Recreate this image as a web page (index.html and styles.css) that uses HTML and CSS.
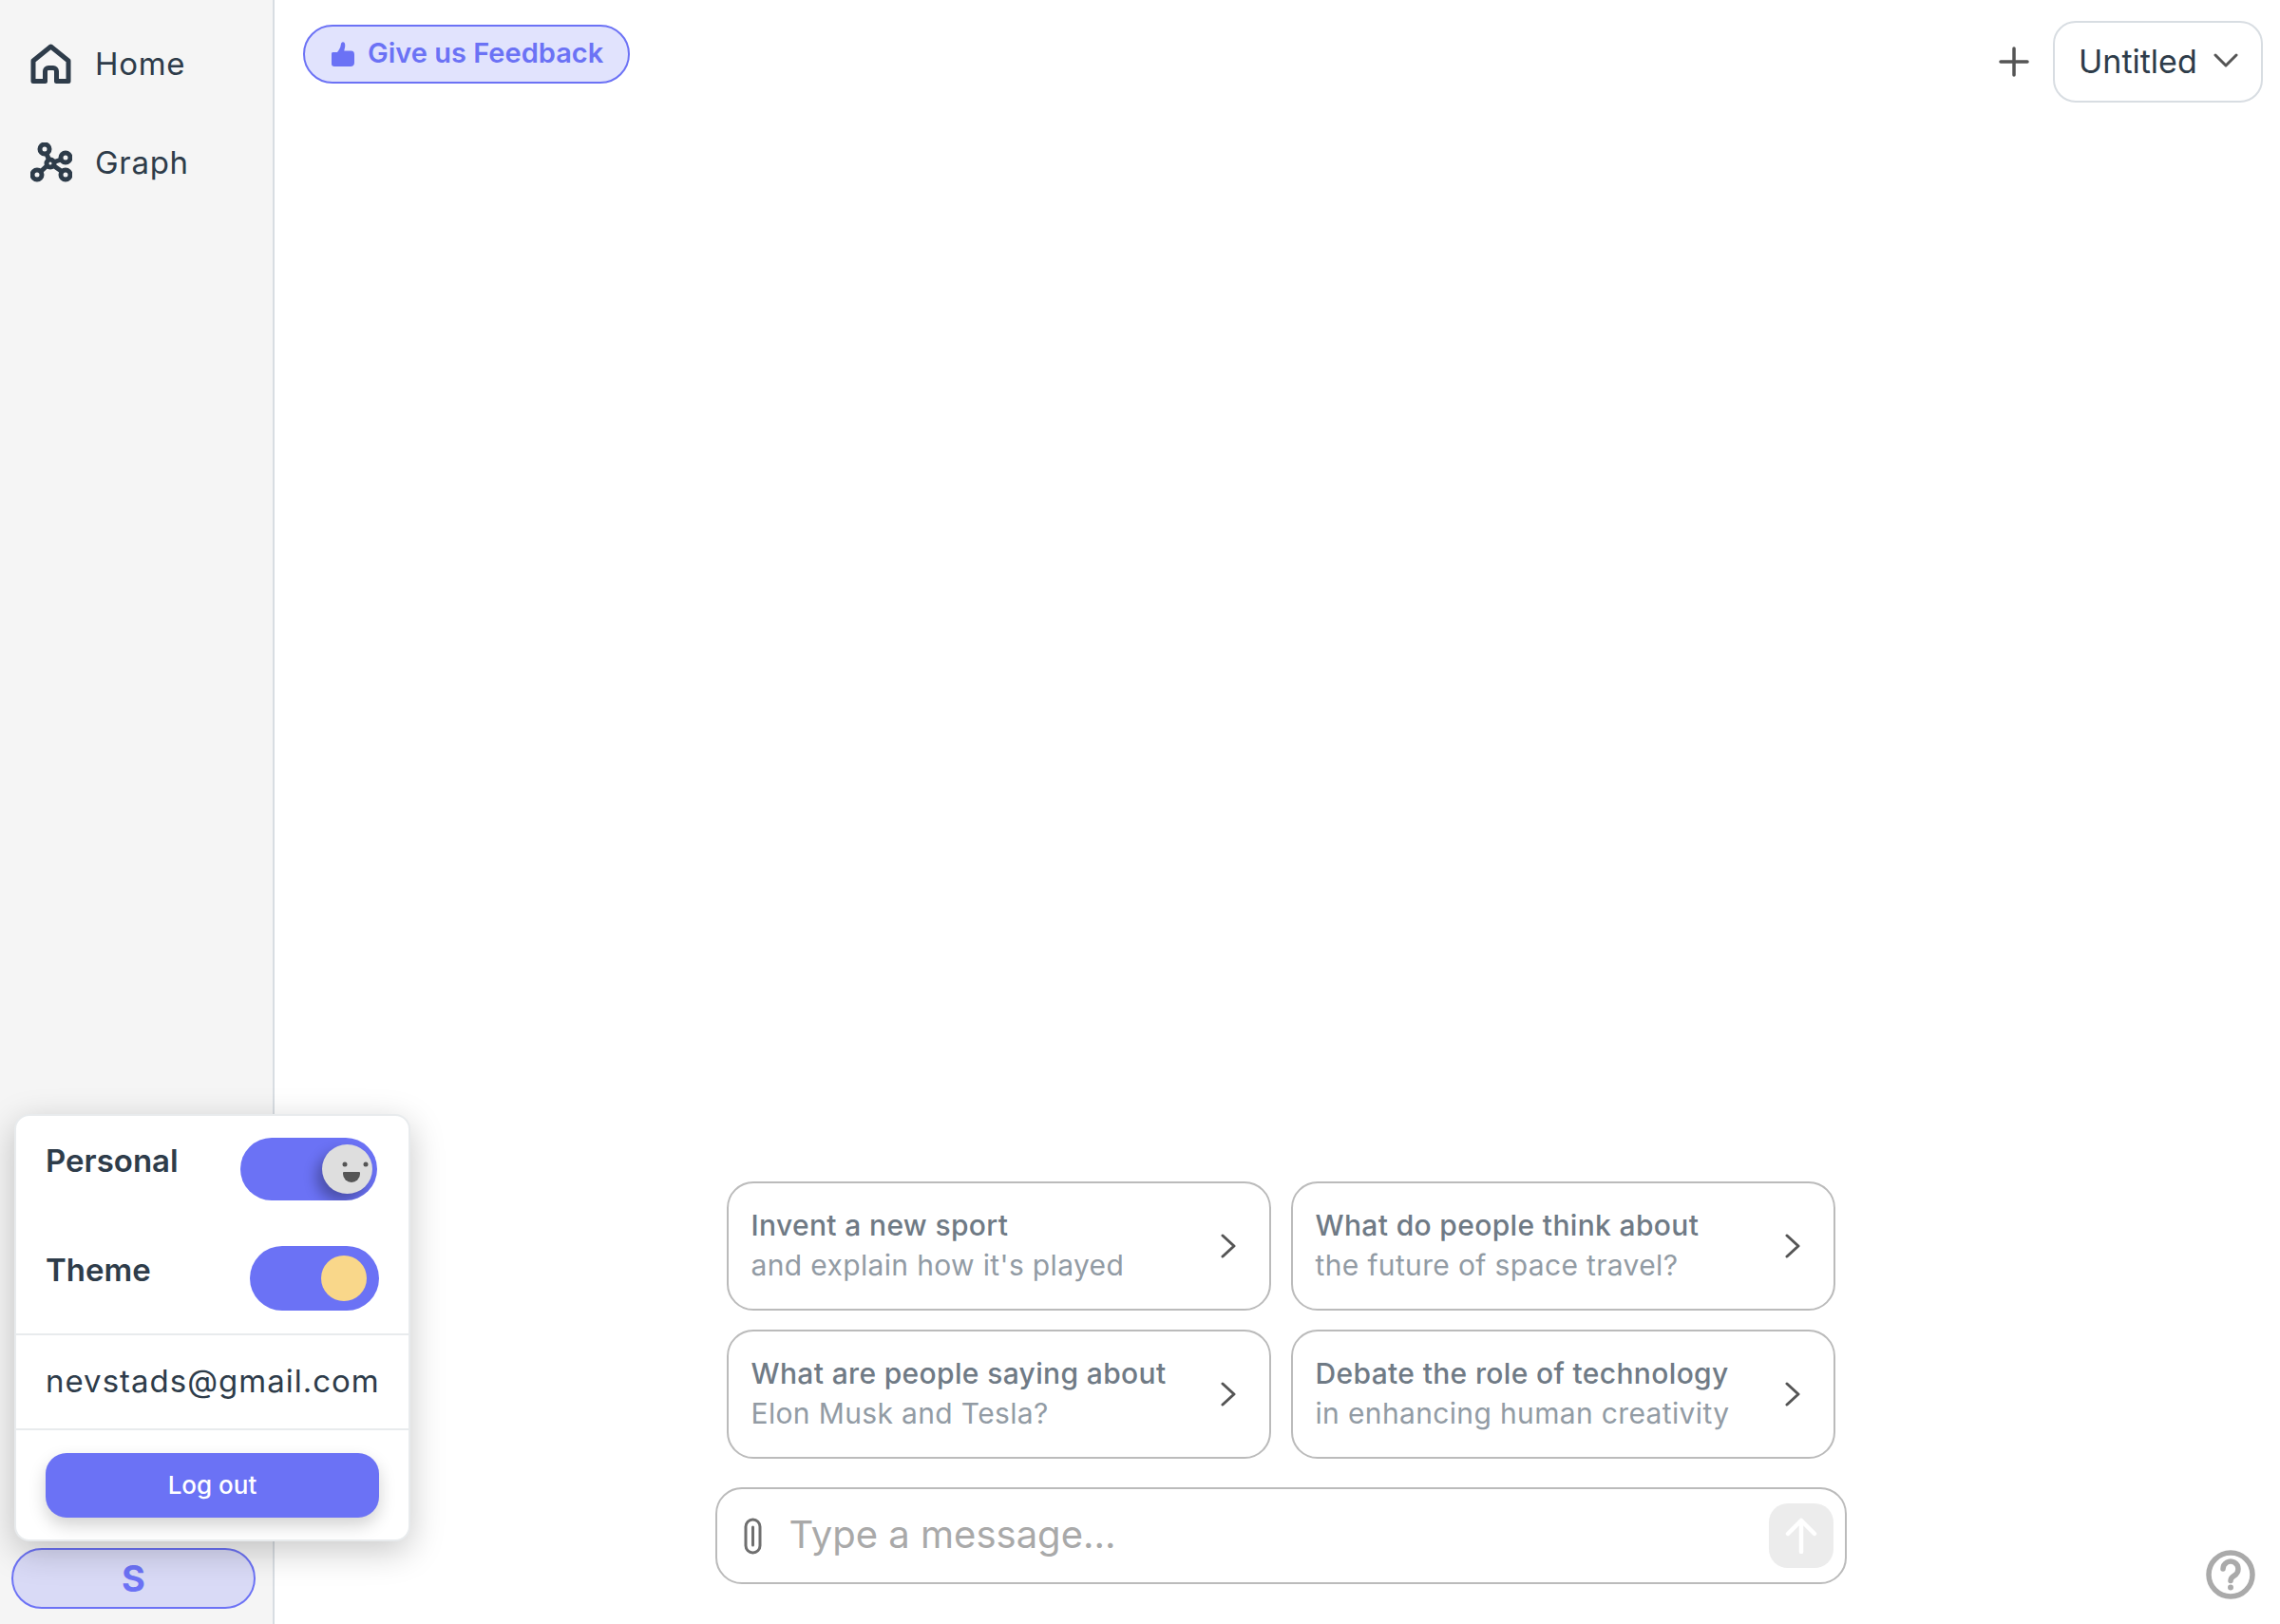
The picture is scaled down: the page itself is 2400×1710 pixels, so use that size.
FILE: index.html
```html
<!DOCTYPE html>
<html>
<head>
  <meta name="viewport" content="width=device-width, initial-scale=1">
  <title>Chat</title>
  <link rel="stylesheet" href="styles.css">
</head>
<body>
  <div class="app">

    <!-- Sidebar -->
    <div class="sidebar">
      <div class="nav">
        <a class="nav-item">
          <svg class="nav-icon" width="44" height="42" viewBox="0 0 44 42" fill="none" stroke="#2e3c4a" stroke-width="5" stroke-linejoin="round">
            <path d="M21.5 3L40 18V39.5H27.5V29a3.5 3.5 0 0 0-3.5-3.5h-5a3.5 3.5 0 0 0-3.5 3.5V39.5H3V18Z"/>
          </svg>
          <span>Home</span>
        </a>
        <a class="nav-item">
          <svg class="nav-icon" width="44" height="42" viewBox="0 0 44 42" fill="none" stroke="#2e3c4a" stroke-width="5">
            <circle cx="15" cy="7" r="5"/>
            <circle cx="21" cy="22" r="4"/>
            <circle cx="37" cy="16" r="5"/>
            <circle cx="37" cy="34" r="5"/>
            <circle cx="7" cy="34" r="5"/>
            <path d="M17 12L19.5 18M25 20.5L32.5 18M24.5 24.5L33 30.5M17.5 24.5L11 30.5"/>
          </svg>
          <span>Graph</span>
        </a>
      </div>
      <button class="user-btn">S</button>
    </div>

    <!-- Main area -->
    <div class="main">
      <div class="topbar">
        <button class="feedback-btn">
          <svg width="25" height="26" viewBox="0 0 25 26" fill="#6b72f5">
            <path d="M1 12.5C1 11.5 1.8 11 2.5 11H7C8.5 9 10.5 6.5 10.8 3C11 .8 12.2 0 13.2 .2C15 .6 15.5 2.5 15.2 5C15 6.8 14.5 8 14.3 9.5H21.5C24 9.5 25 11 25 13.5V22C25 24.5 23.5 26 21 26H4C2 26 1 25 1 23.5Z"/>
          </svg>
          <span>Give us Feedback</span>
        </button>
        <div class="top-actions">
          <svg width="32" height="32" viewBox="0 0 32 32" fill="none" stroke="#555" stroke-width="3.5" stroke-linecap="round">
            <path d="M16 2V30M2 16H30"/>
          </svg>
          <button class="doc-select">
            <span>Untitled</span>
            <svg width="26" height="16" viewBox="0 0 26 16" fill="none" stroke="#555" stroke-width="3" stroke-linecap="round" stroke-linejoin="round">
              <path d="M2 2L13 13L24 2"/>
            </svg>
          </button>
        </div>
      </div>

      <div class="spacer"></div>

      <!-- Suggestions -->
      <div class="suggestions">
        <div class="suggestion">
          <div>
            <div class="suggestion-title">Invent a new sport</div>
            <div class="suggestion-sub">and explain how it's played</div>
          </div>
          <svg width="16" height="26" viewBox="0 0 16 26" fill="none" stroke="#555" stroke-width="3" stroke-linecap="round" stroke-linejoin="round"><path d="M2 2L14 13L2 24"/></svg>
        </div>
        <div class="suggestion">
          <div>
            <div class="suggestion-title">What do people think about</div>
            <div class="suggestion-sub">the future of space travel?</div>
          </div>
          <svg width="16" height="26" viewBox="0 0 16 26" fill="none" stroke="#555" stroke-width="3" stroke-linecap="round" stroke-linejoin="round"><path d="M2 2L14 13L2 24"/></svg>
        </div>
        <div class="suggestion">
          <div>
            <div class="suggestion-title">What are people saying about</div>
            <div class="suggestion-sub">Elon Musk and Tesla?</div>
          </div>
          <svg width="16" height="26" viewBox="0 0 16 26" fill="none" stroke="#555" stroke-width="3" stroke-linecap="round" stroke-linejoin="round"><path d="M2 2L14 13L2 24"/></svg>
        </div>
        <div class="suggestion">
          <div>
            <div class="suggestion-title">Debate the role of technology</div>
            <div class="suggestion-sub">in enhancing human creativity</div>
          </div>
          <svg width="16" height="26" viewBox="0 0 16 26" fill="none" stroke="#555" stroke-width="3" stroke-linecap="round" stroke-linejoin="round"><path d="M2 2L14 13L2 24"/></svg>
        </div>
      </div>

      <!-- Message box -->
      <div class="composer">
        <svg class="clip" width="19" height="39" viewBox="0 0 19 39" fill="none" stroke="#6f6f6f" stroke-width="3" stroke-linecap="round">
          <path d="M9.5 10V29M17 9.5V29.5a7.5 7.5 0 0 1-15 0V9.5a7.5 7.5 0 0 1 15 0"/>
        </svg>
        <input class="message-input" type="text" placeholder="Type a message...">
        <button class="send-btn">
          <svg width="34" height="38" viewBox="0 0 34 38" fill="none" stroke="#fff" stroke-width="4.5" stroke-linecap="round" stroke-linejoin="round">
            <path d="M17 36V3M3 17L17 3L31 17"/>
          </svg>
        </button>
      </div>
    </div>

    <!-- Account popup, opened over the sidebar -->
    <div class="account-menu">
      <div class="menu-toggles">
        <div class="toggle-row">
          <span class="toggle-label">Personal</span>
          <div class="toggle toggle-personal">
            <svg class="knob-face" width="53" height="52" viewBox="0 0 53 52" fill="#555">
              <circle cx="24" cy="21" r="2.5"/>
              <circle cx="46" cy="21" r="2.5"/>
              <path d="M22 30a1 1 0 0 1 1-1H39a1 1 0 0 1 1 1V31a9 9 0 0 1-18 0Z"/>
            </svg>
          </div>
        </div>
        <div class="toggle-row toggle-row-theme">
          <span class="toggle-label">Theme</span>
          <div class="toggle toggle-theme">
            <div class="knob-sun"></div>
          </div>
        </div>
      </div>
      <div class="menu-email">nevstads@gmail.com</div>
      <div class="menu-logout">
        <button class="logout-btn">Log out</button>
      </div>
    </div>

    <!-- Help -->
    <svg class="help" width="52" height="52" viewBox="0 0 52 52" fill="none" stroke="#aaa" stroke-width="5.5" stroke-linecap="round">
      <circle cx="26" cy="26" r="23"/>
      <path d="M18 20a8 8 0 1 1 12 7c-2.5 1.5-4 2.5-4 5.5"/>
      <circle cx="26" cy="39.5" r="1.5" fill="#aaa" stroke-width="3"/>
    </svg>
  </div>
</body>
</html>
```

FILE: styles.css
```css
/* Basics */
* {
  box-sizing: border-box;
}
body {
  margin: 0;
  background: #fff;
  color: #2e3c4a;
  font-family: Inter, "Open Sans", sans-serif;
}
button, input {
  font-family: inherit;
}
button {
  cursor: pointer;
}

.app {
  position: relative;
  display: flex;
  height: 100vh;
  overflow: hidden;
}

/* Sidebar */
.sidebar {
  width: 289px;
  flex-shrink: 0;
  display: flex;
  flex-direction: column;
  justify-content: space-between;
  background: #f5f5f5;
  border-right: 2px solid #d8dde2;
  padding: 15px 0 16px 12px;
}
.nav-item {
  display: flex;
  align-items: center;
  gap: 24px;
  height: 104px;
  padding-left: 20px;
  font-size: 33px;
  letter-spacing: 0.7px;
  color: #2e3c4a;
}
.user-btn {
  width: 257px;
  height: 64px;
  background: #d9daf6;
  border: 2px solid #6c72f5;
  border-radius: 32px;
  color: #6c72f5;
  font-size: 38px;
  font-weight: 700;
}

/* Top bar */
.main {
  flex: 1;
  display: flex;
  flex-direction: column;
  align-items: center;
  padding: 0 0 42px 7px;
}
.topbar {
  align-self: stretch;
  display: flex;
  justify-content: space-between;
  align-items: flex-start;
  padding: 22px 18px 0 23px;
}
.feedback-btn {
  display: flex;
  align-items: center;
  gap: 14px;
  width: 344px;
  height: 62px;
  margin-top: 4px;
  padding: 0 0 3px 27px;
  background: #e1e3fd;
  border: 2px solid #6c72f5;
  border-radius: 31px;
  color: #6b72f5;
  font-size: 29px;
  font-weight: 600;
  white-space: nowrap;
}
.feedback-btn svg {
  margin-top: 3px;
}
.top-actions {
  display: flex;
  align-items: center;
  gap: 25px;
}
.doc-select {
  display: flex;
  align-items: center;
  justify-content: space-between;
  width: 221px;
  height: 86px;
  padding: 0 24px 2px 25px;
  background: #fff;
  border: 2px solid #d8dde2;
  border-radius: 24px;
  color: #2e3c4a;
  font-size: 34px;
}
.spacer {
  flex: 1;
}

/* Suggestions */
.suggestions {
  display: grid;
  grid-template-columns: 573px 573px;
  grid-auto-rows: 136px;
  column-gap: 21px;
  row-gap: 20px;
  margin-bottom: 30px;
}
.suggestion {
  display: flex;
  align-items: center;
  justify-content: space-between;
  padding: 0 35px 0 24px;
  border: 2px solid #bbb;
  border-radius: 28px;
  line-height: 42px;
  font-size: 30px;
  letter-spacing: 0.35px;
}
.suggestion > div {
  margin-bottom: 3px;
}
.suggestion-title {
  color: #6f7a85;
  font-weight: 500;
}
.suggestion-sub {
  color: #929ba4;
}

/* Message box */
.composer {
  display: flex;
  align-items: center;
  width: 1191px;
  height: 102px;
  padding: 0 12px 0 28px;
  border: 2px solid #bbb;
  border-radius: 28px;
}
.clip {
  flex-shrink: 0;
}
.message-input {
  flex: 1;
  min-width: 0;
  margin-left: 29px;
  border: none;
  outline: none;
  padding: 0 0 3px;
  font-size: 40px;
  color: #2e3c4a;
}
.message-input::placeholder {
  color: #a9a9a9;
  opacity: 1;
}
.send-btn {
  display: flex;
  align-items: center;
  justify-content: center;
  width: 68px;
  height: 68px;
  padding: 0;
  background: #ececec;
  border: none;
  border-radius: 20px;
}

/* Account popup */
.account-menu {
  position: absolute;
  left: 15px;
  bottom: 87px;
  width: 417px;
  height: 450px;
  display: flex;
  flex-direction: column;
  background: #fff;
  border: 2px solid #e8ebed;
  border-radius: 16px;
  box-shadow: 0 10px 36px rgba(0, 0, 0, 0.22);
}
.menu-toggles {
  padding: 23px 33px 24px 31px;
  border-bottom: 2px solid #e8ebed;
}
.toggle-row {
  display: flex;
  align-items: center;
  justify-content: space-between;
}
.toggle-row-theme {
  margin-top: 48px;
  margin-right: -2px;
}
.toggle-label {
  margin-bottom: 18px;
  font-size: 33px;
  font-weight: 600;
}
.toggle {
  display: flex;
  align-items: center;
  justify-content: flex-end;
  overflow: hidden;
  background: #6b72f5;
}
.toggle-personal {
  width: 144px;
  height: 66px;
  padding-right: 5px;
  border-radius: 33px;
}
.knob-face {
  background: #dedede;
  border-radius: 50%;
  box-shadow: -6px 8px 14px rgba(0, 0, 0, 0.3);
}
.toggle-theme {
  width: 136px;
  height: 68px;
  padding-right: 13px;
  border-radius: 34px;
}
.knob-sun {
  width: 48px;
  height: 48px;
  background: #f9d78a;
  border-radius: 50%;
}
.menu-email {
  height: 100px;
  display: flex;
  align-items: center;
  padding-bottom: 2px;
  padding-left: 31px;
  border-bottom: 2px solid #e8ebed;
  font-size: 33px;
  letter-spacing: 1px;
  white-space: nowrap;
}
.menu-logout {
  padding: 24px 31px 0 31px;
}
.logout-btn {
  width: 100%;
  height: 68px;
  padding-bottom: 3px;
  background: #6b72f5;
  border: none;
  border-radius: 22px;
  color: #fff;
  font-size: 26px;
  font-weight: 500;
  box-shadow: 0 8px 18px rgba(0, 0, 0, 0.18);
}

/* Help icon */
.help {
  position: absolute;
  right: 26px;
  bottom: 26px;
}
```
